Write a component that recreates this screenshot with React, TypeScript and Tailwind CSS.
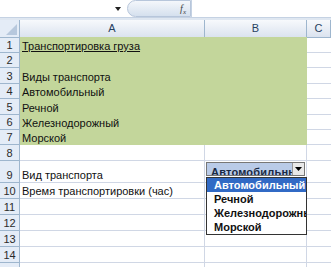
import React from 'react';

const rowHeights = [16, 15, 16, 15, 16, 15, 15, 16, 22, 16, 16, 16, 16, 16, 16];

const cellsA: Record<number, string> = {
  1: 'Транспортировка груза',
  3: 'Виды транспорта',
  4: 'Автомобильный',
  5: 'Речной',
  6: 'Железнодорожный',
  7: 'Морской',
  9: 'Вид транспорта',
  10: 'Время транспортировки (час)',
};

const options = ['Автомобильный', 'Речной', 'Железнодорожный', 'Морской'];

const App: React.FC = () => {
  return (
    <div className="w-[331px] h-[267px] overflow-hidden bg-white relative" style={{ fontFamily: '"Liberation Sans", Arial, sans-serif' }}>
      {/* Formula bar */}
      <div className="flex h-[18px] border-b border-[#c5d2e3] bg-white">
        <div className="w-[127px] flex items-center justify-end pr-[6px]">
          <svg width="6" height="4" viewBox="0 0 6 4"><path d="M0 0h6L3 4z" fill="#222" /></svg>
        </div>
        <div className="w-[64px] h-[17px] rounded-l-full border border-[#b7c6db] bg-gradient-to-b from-[#f4f7fb] to-[#d5e0ee] flex items-center justify-end pr-[4px]">
          <span className="italic text-[10px] text-[#444]" style={{ fontFamily: '"Liberation Serif", serif' }}>f<sub className="text-[7px]">x</sub></span>
        </div>
        <div className="flex-1 border-l border-[#c5d2e3] bg-white" />
      </div>
      <div className="h-[2px] bg-[#dfe7f1]" />

      {/* Header row */}
      <div className="grid grid-cols-[20px_185px_102px_24px] h-[17px]">
        <div className="bg-[#e4ecf7] border-r border-b border-[#9eb6ce] relative">
          <svg className="absolute right-[2px] bottom-[2px]" width="11" height="11" viewBox="0 0 11 11"><path d="M11 0v11H0z" fill="#b7c8dd" /></svg>
        </div>
        {['A', 'B', 'C'].map((c) => (
          <div key={c} className="bg-gradient-to-b from-[#f7f9fc] to-[#dbe3ef] border-r border-b border-[#9eb6ce] flex items-center justify-center text-[11px] text-[#27415f]">
            {c}
          </div>
        ))}
      </div>

      {/* Rows */}
      {rowHeights.map((h, i) => {
        const r = i + 1;
        const green = r <= 7;
        return (
          <div key={r} className="grid grid-cols-[20px_185px_102px_24px]" style={{ height: h }}>
            <div className="bg-[#e4ecf7] border-r border-b border-[#9eb6ce] flex items-end justify-center pb-[1px] text-[11px] text-[#2b2b2b] leading-none">
              {r <= 14 ? r : ''}
            </div>
            <div className={`${green ? 'bg-[#c3d69b]' : 'border-r border-b border-[#d0d7e5]'} flex items-end pl-[2px] pb-[1px] text-[11px] text-[#111] leading-none whitespace-nowrap`}>
              <span className={r === 1 ? 'underline' : ''}>{cellsA[r] ?? ''}</span>
            </div>
            <div className={green ? 'bg-[#c3d69b]' : 'border-r border-b border-[#d0d7e5]'} />
            <div className="border-b border-[#d0d7e5]" />
          </div>
        );
      })}

      {/* Data validation dropdown over B9 */}
      <div className="absolute left-[206px] top-[162px] w-[99px] h-[14px] border border-[#777] bg-white flex">
        <div className="flex-1 overflow-hidden bg-[#b9cbe8] flex items-end">
          <span className="text-[11px] font-bold text-[#1a2a44] tracking-[0.2px] leading-none pl-[4px] translate-y-[3px] whitespace-nowrap">Автомобильны</span>
        </div>
        <div className="w-[12px] bg-[#e8e8e8] border-l border-[#999] flex items-center justify-center">
          <svg width="7" height="4" viewBox="0 0 7 4"><path d="M0 0h7L3.5 4z" fill="#000" /></svg>
        </div>
      </div>
      <div className="absolute left-[206px] top-[177px] w-[101px] h-[58px] border border-[#333] bg-white flex flex-col">
        {options.map((o, i) => (
          <div key={o} className={`h-[14px] flex items-center pl-[7px] text-[11px] font-bold whitespace-nowrap overflow-hidden ${i === 0 ? 'bg-[#316ac5] text-white' : 'text-[#111]'}`}>
            {o}
          </div>
        ))}
      </div>
    </div>
  );
};

export default App;
